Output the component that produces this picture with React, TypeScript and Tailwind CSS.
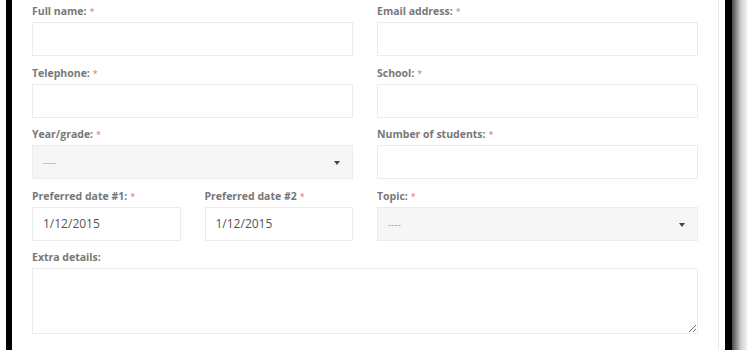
import { ReactNode } from 'react';

const font = { fontFamily: '"Open Sans", "Noto Sans", sans-serif' };

const Label = ({ text, required = true }: { text: string; required?: boolean }) => (
  <div className="h-[14px] text-[10.5px] leading-[14px] font-bold text-[#777] mb-[4px] whitespace-nowrap">
    {text}
    {required && <span className="text-[#d97373] font-normal text-[9px] ml-[3px]">*</span>}
  </div>
);

const Field = ({ label, required, children }: { label: string; required?: boolean; children: ReactNode }) => (
  <div className="mb-[9.5px] min-w-0">
    <Label text={label} required={required} />
    {children}
  </div>
);

const TextInput = ({ value = '' }: { value?: string }) => (
  <div className="flex items-center h-[34px] border border-[#ececec] bg-white pl-[10px] text-[12px] text-[#555]">
    {value}
  </div>
);

const Select = () => (
  <div className="relative flex items-center h-[34px] border border-[#ececec] bg-[#f6f6f6] pl-[10px]">
    <span className="text-[10px] leading-[14px] text-[#a8a8a8]">----</span>
    <span className="absolute right-[12px] top-[15px] w-0 h-0 border-l-[3px] border-r-[3px] border-t-[4px] border-l-transparent border-r-transparent border-t-[#444]" />
  </div>
);

export default function App() {
  return (
    <div className="w-[747px] h-[350px] bg-white flex overflow-hidden" style={font}>
      <div className="w-[6px] shrink-0" />
      <div className="w-[6px] shrink-0 bg-black" />
      <div className="w-[707px] shrink-0 border-r border-[#ececec] pl-[20px] pr-[20px] pt-[4px]">
        <div className="grid grid-cols-2 gap-x-[24px]">
          <Field label="Full name:">
            <TextInput />
          </Field>
          <Field label="Email address:">
            <TextInput />
          </Field>
          <Field label="Telephone:">
            <TextInput />
          </Field>
          <Field label="School:">
            <TextInput />
          </Field>
          <Field label="Year/grade:">
            <Select />
          </Field>
          <Field label="Number of students:">
            <TextInput />
          </Field>
          <div className="grid grid-cols-2 gap-x-[24px]">
            <Field label="Preferred date #1:">
              <TextInput value="1/12/2015" />
            </Field>
            <Field label="Preferred date #2">
              <TextInput value="1/12/2015" />
            </Field>
          </div>
          <Field label="Topic:">
            <Select />
          </Field>
          <div className="col-span-2">
            <Label text="Extra details:" required={false} />
            <textarea
              readOnly
              className="block w-full h-[66px] border border-[#ececec] bg-white outline-none resize"
            />
          </div>
        </div>
      </div>
      <div className="w-[6px] shrink-0 bg-white" />
      <div className="w-[7px] shrink-0 bg-black" />
      <div className="flex-1 bg-[linear-gradient(to_right,#4a4a4a,#d0d0d0_60%,#f2f2f2)]" />
    </div>
  );
}
